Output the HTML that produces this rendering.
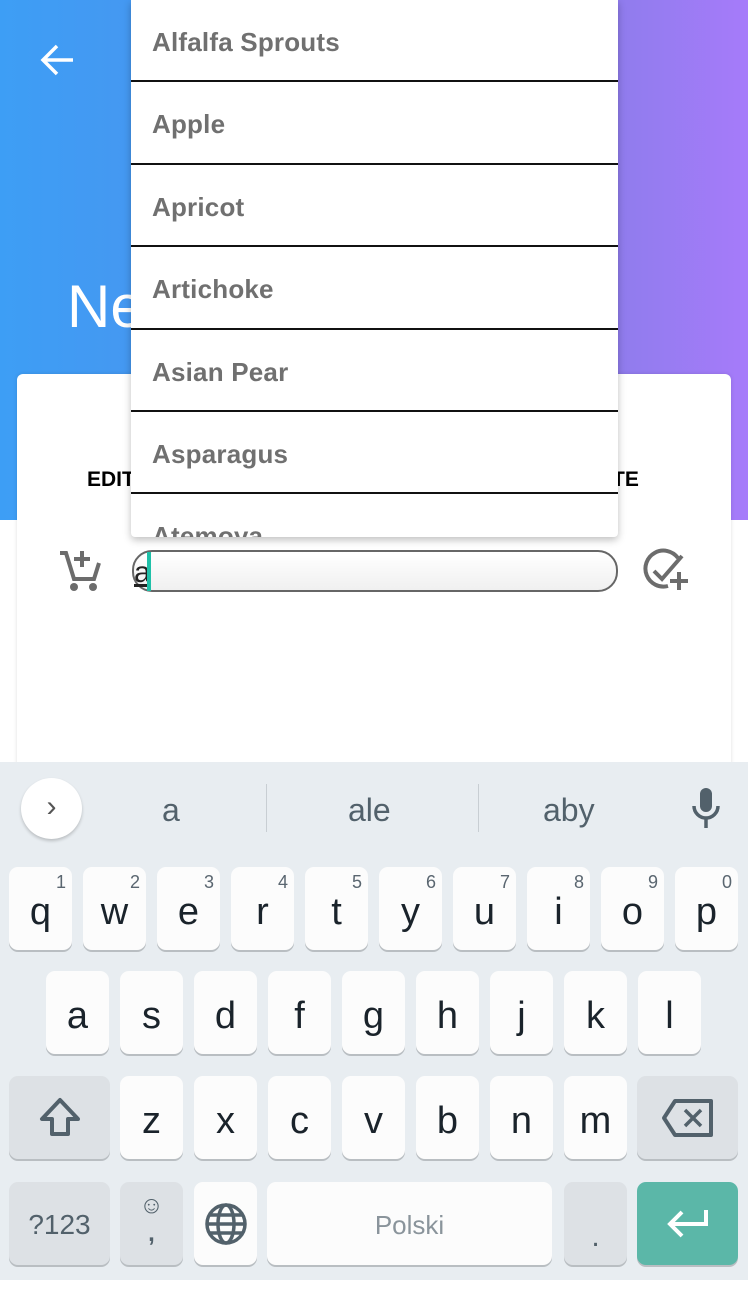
<!DOCTYPE html>
<html><head><meta charset="utf-8"><style>
*{margin:0;padding:0;box-sizing:border-box}
body{width:748px;height:1280px;position:relative;overflow:hidden;font-family:"Liberation Sans",sans-serif;background:#fff}
.hdr{position:absolute;left:0;top:0;width:748px;height:520px;background:linear-gradient(90deg,#3d9ef5 0%,#4a94ef 30%,#8c7ceb 80%,#a67bfa 100%)}
.card{position:absolute;left:17px;top:374px;width:714px;height:400px;background:#fff;border-radius:6px;box-shadow:0 0 4px rgba(0,0,0,.12)}
.dd{position:absolute;left:131px;top:0;width:487px;height:537px;background:#fff;border-radius:0 0 4px 4px;box-shadow:0 3px 8px rgba(0,0,0,.25);overflow:hidden}
.it{height:82.4px;border-bottom:2px solid #111;font-size:26px;color:#707070;font-weight:bold;padding:27px 0 0 21px;letter-spacing:.2px}
.kb{position:absolute;left:0;top:762px;width:748px;height:518px;background:#e8edf1}
.k{position:absolute;width:63px;height:83px;background:#fcfcfc;border-radius:9px;box-shadow:0 2px 0 #b9bec2;font-size:38px;color:#1a232b;text-align:center;line-height:90px}
.k sup{position:absolute;right:6px;top:-30px;font-size:18px;color:#5a6670}
.g{background:#dde1e5}
.s{position:absolute;top:792px;font-size:32px;color:#52616b}
</style></head><body>
<div class="hdr"></div>
<svg style="position:absolute;left:38px;top:40px" width="40" height="40" viewBox="0 0 40 40"><path d="M35 20H6M19 6 5 20l14 14" stroke="#fff" stroke-width="3.5" fill="none"/></svg>
<div style="position:absolute;left:67px;top:272px;font-size:60px;color:#fff">Ne</div>
<div class="card"></div>
<div style="position:absolute;left:87px;top:468px;font-size:21px;font-weight:bold">EDIT</div>
<div style="position:absolute;left:612px;top:468px;font-size:21px;font-weight:bold">TE</div>
<svg style="position:absolute;left:57px;top:547px" width="46" height="46" viewBox="0 0 46 46"><path d="M3 6h6l8 26h20l5-16" stroke="#6c6c6c" stroke-width="4" fill="none"/><path d="M25 4v16M17 12h16" stroke="#6c6c6c" stroke-width="4"/><circle cx="17" cy="40" r="4" fill="#6c6c6c"/><circle cx="36" cy="40" r="4" fill="#6c6c6c"/></svg>
<div style="position:absolute;left:132px;top:550px;width:486px;height:42px;border:2px solid #666;border-radius:20px;background:linear-gradient(#fff,#f0f0f0)"></div>
<div style="position:absolute;left:134px;top:556px;font-size:30px;color:#222;text-decoration:underline">a</div>
<div style="position:absolute;left:147px;top:552px;width:4px;height:39px;background:#1fc0a8"></div>
<svg style="position:absolute;left:642px;top:548px" width="50" height="46" viewBox="0 0 50 46"><path d="M36 10A18 18 0 1 0 26 38" stroke="#6c6c6c" stroke-width="4" fill="none"/><path d="M12 23l8 8L40 8" stroke="#6c6c6c" stroke-width="4" fill="none"/><path d="M37 24v18M28 33h18" stroke="#6c6c6c" stroke-width="4"/></svg>
<div class="dd">
<div class="it">Alfalfa Sprouts</div><div class="it">Apple</div><div class="it">Apricot</div><div class="it">Artichoke</div><div class="it">Asian Pear</div><div class="it">Asparagus</div><div class="it" style="border:0">Atemoya</div>
</div>
<div class="kb"></div>
<div style="position:absolute;left:21px;top:778px;width:61px;height:61px;border-radius:50%;background:#fff;box-shadow:0 2px 3px rgba(0,0,0,.2);text-align:center;line-height:58px;font-size:30px;color:#555">›</div>
<div class="s" style="left:162px">a</div>
<div style="position:absolute;left:266px;top:784px;width:1px;height:48px;background:#c8ced3"></div>
<div class="s" style="left:348px">ale</div>
<div style="position:absolute;left:478px;top:784px;width:1px;height:48px;background:#c8ced3"></div>
<div class="s" style="left:543px">aby</div>
<svg style="position:absolute;left:690px;top:786px" width="32" height="44" viewBox="0 0 32 44"><rect x="10" y="2" width="12" height="24" rx="6" fill="#52616b"/><path d="M4 20a12 12 0 0 0 24 0M16 32v10" stroke="#52616b" stroke-width="3.5" fill="none"/></svg>
<div class="k" style="left:9px;top:867px">q<sup>1</sup></div>
<div class="k" style="left:83px;top:867px">w<sup>2</sup></div>
<div class="k" style="left:157px;top:867px">e<sup>3</sup></div>
<div class="k" style="left:231px;top:867px">r<sup>4</sup></div>
<div class="k" style="left:305px;top:867px">t<sup>5</sup></div>
<div class="k" style="left:379px;top:867px">y<sup>6</sup></div>
<div class="k" style="left:453px;top:867px">u<sup>7</sup></div>
<div class="k" style="left:527px;top:867px">i<sup>8</sup></div>
<div class="k" style="left:601px;top:867px">o<sup>9</sup></div>
<div class="k" style="left:675px;top:867px">p<sup>0</sup></div>
<div class="k" style="left:46px;top:971px">a</div>
<div class="k" style="left:120px;top:971px">s</div>
<div class="k" style="left:194px;top:971px">d</div>
<div class="k" style="left:268px;top:971px">f</div>
<div class="k" style="left:342px;top:971px">g</div>
<div class="k" style="left:416px;top:971px">h</div>
<div class="k" style="left:490px;top:971px">j</div>
<div class="k" style="left:564px;top:971px">k</div>
<div class="k" style="left:638px;top:971px">l</div>
<div class="k g" style="left:9px;top:1076px;width:101px;line-height:normal"><svg style="margin-top:20px" width="46" height="44" viewBox="0 0 46 44"><path d="M23 4 5 23h10v15h16V23h10z" stroke="#52616b" stroke-width="4" fill="none" stroke-linejoin="round"/></svg></div>
<div class="k" style="left:120px;top:1076px">z</div>
<div class="k" style="left:194px;top:1076px">x</div>
<div class="k" style="left:268px;top:1076px">c</div>
<div class="k" style="left:342px;top:1076px">v</div>
<div class="k" style="left:416px;top:1076px">b</div>
<div class="k" style="left:490px;top:1076px">n</div>
<div class="k" style="left:564px;top:1076px">m</div>
<div class="k g" style="left:637px;top:1076px;width:101px;line-height:normal"><svg style="margin-top:22px" width="54" height="40" viewBox="0 0 54 40"><path d="M14 3h36v34H14L3 20z" stroke="#52616b" stroke-width="4" fill="none" stroke-linejoin="round"/><path d="M24 12l16 16M40 12 24 28" stroke="#52616b" stroke-width="3.5"/></svg></div>
<div class="k g" style="left:9px;top:1182px;width:101px;font-size:28px;color:#52616b;line-height:86px">?123</div>
<div class="k g" style="left:120px;top:1182px;font-size:24px;line-height:28px;padding-top:10px;color:#52616b">☺<br><b>,</b></div>
<div class="k" style="left:194px;top:1182px;line-height:normal"><svg style="margin-top:20px" width="44" height="44" viewBox="0 0 44 44" fill="none" stroke="#52616b" stroke-width="3.5"><circle cx="22" cy="22" r="19"/><ellipse cx="22" cy="22" rx="8" ry="19"/><path d="M3 22h38M6 13h32M6 31h32"/></svg></div>
<div class="k" style="left:267px;top:1182px;width:285px;font-size:26px;color:#8a949b;line-height:86px">Polski</div>
<div class="k g" style="left:564px;top:1182px;color:#52616b;line-height:110px;font-size:30px">.</div>
<div class="k" style="left:637px;top:1182px;width:101px;background:#5bb7a8;line-height:normal"><svg style="margin-top:26px" width="44" height="32" viewBox="0 0 44 32"><path d="M40 2v14H6M16 4 4 16l12 12" stroke="#fff" stroke-width="4" fill="none"/></svg></div>
</body></html>
